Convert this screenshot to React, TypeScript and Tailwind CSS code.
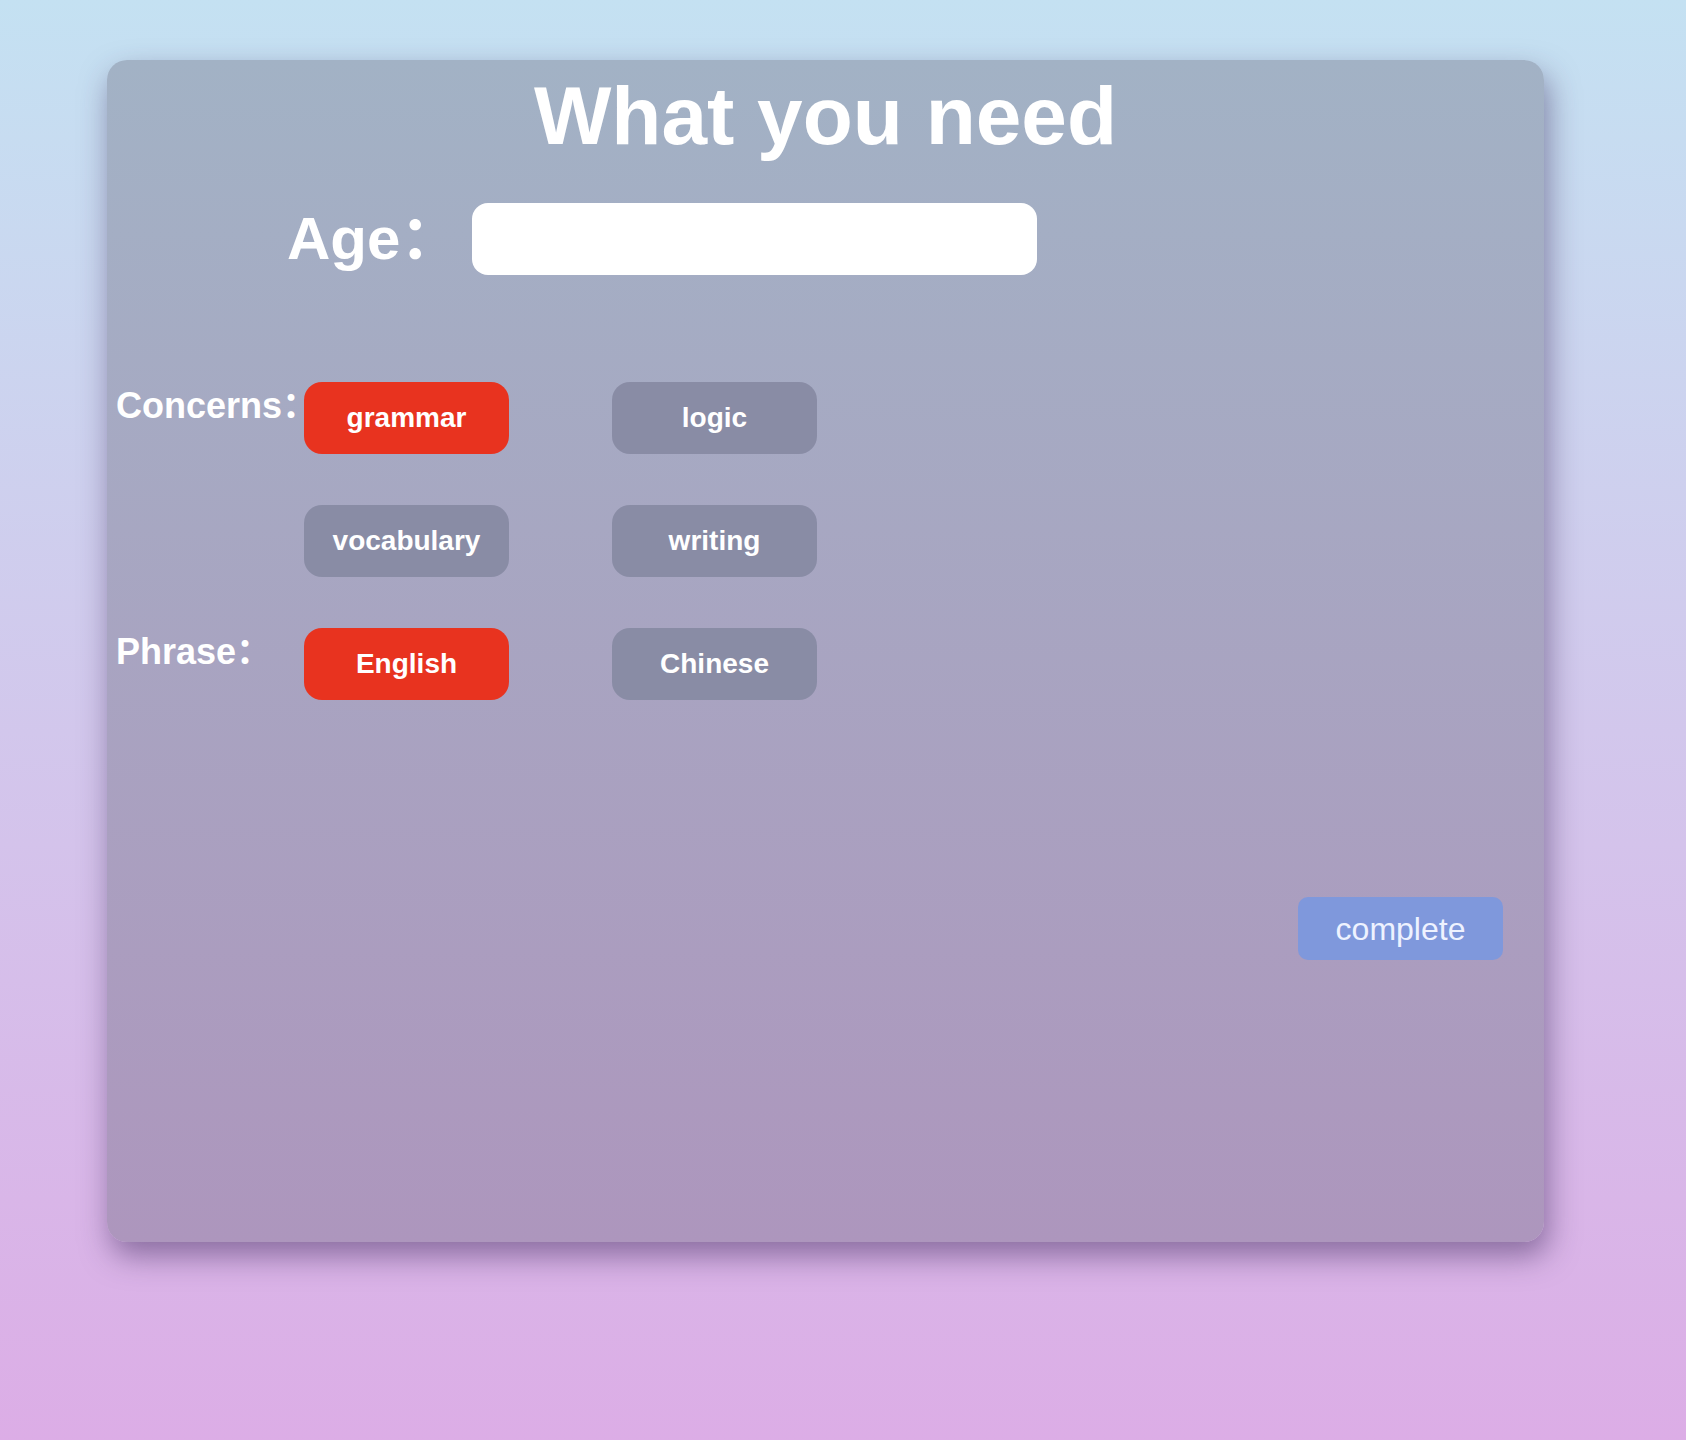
import { useState } from 'react';

const concerns = ['grammar', 'logic', 'vocabulary', 'writing'];
const phrases = ['English', 'Chinese'];

function Choice({ label, active, onClick }: { label: string; active: boolean; onClick: () => void }) {
  return (
    <button
      onClick={onClick}
      className={`w-[205px] h-[72px] rounded-[18px] text-[28px] font-bold text-white flex items-center justify-center shrink-0 ${
        active ? 'bg-[#e8331f]' : 'bg-[#898ca5]'
      }`}
    >
      {label}
    </button>
  );
}

export default function App() {
  const [picked, setPicked] = useState<string[]>(['grammar']);
  const [phrase, setPhrase] = useState('English');
  const [age, setAge] = useState('');

  const toggle = (c: string) =>
    setPicked((p) => (p.includes(c) ? p.filter((x) => x !== c) : [...p, c]));

  return (
    <div className="min-h-[1440px] w-full bg-gradient-to-b from-[#c4e1f2] to-[#dcade6] pt-[60px] pl-[107px] font-['Liberation_Sans','Noto_Sans_CJK_SC',sans-serif]">
      <div className="w-[1437px] h-[1182px] rounded-[20px] bg-gradient-to-b from-[#a2b2c5] to-[#ad96bd] shadow-[4px_14px_30px_rgba(60,40,90,0.5)] pt-[15px] flex flex-col">
        {/* 标题 */}
        <h1 className="text-center text-white text-[82px] font-bold leading-none">What you need</h1>

        {/* Age */}
        <div className="mt-[46px] pl-[180px] flex items-center">
          <span className="text-white text-[60px] font-bold leading-none w-[185px] shrink-0 whitespace-nowrap">Age：</span>
          <input
            value={age}
            onChange={(e) => setAge(e.target.value)}
            className="w-[565px] h-[72px] rounded-[16px] bg-white outline-none px-4 text-[28px] text-gray-700"
          />
        </div>

        {/* Concerns + Phrase */}
        <div className="mt-[107px] pl-[9px] flex flex-col gap-[51px]">
          <div className="flex items-start">
            <span className="w-[188px] shrink-0 whitespace-nowrap text-white text-[36px] font-bold leading-[44px] pt-[2px]">Concerns：</span>
            <div className="flex gap-[103px]">
              <Choice label={concerns[0]} active={picked.includes(concerns[0])} onClick={() => toggle(concerns[0])} />
              <Choice label={concerns[1]} active={picked.includes(concerns[1])} onClick={() => toggle(concerns[1])} />
            </div>
          </div>
          <div className="flex items-start">
            <span className="w-[188px] shrink-0" />
            <div className="flex gap-[103px]">
              <Choice label={concerns[2]} active={picked.includes(concerns[2])} onClick={() => toggle(concerns[2])} />
              <Choice label={concerns[3]} active={picked.includes(concerns[3])} onClick={() => toggle(concerns[3])} />
            </div>
          </div>
          <div className="flex items-start">
            <span className="w-[188px] shrink-0 whitespace-nowrap text-white text-[36px] font-bold leading-[44px] pt-[2px]">Phrase：</span>
            <div className="flex gap-[103px]">
              {phrases.map((p) => (
                <Choice key={p} label={p} active={phrase === p} onClick={() => setPhrase(p)} />
              ))}
            </div>
          </div>
        </div>

        {/* 完成 */}
        <div className="mt-[197px] flex justify-end pr-[41px]">
          <button className="w-[205px] h-[63px] rounded-[10px] bg-[#7f98dc] text-[#eef2ff] text-[32px] flex items-center justify-center">
            complete
          </button>
        </div>
      </div>
    </div>
  );
}
